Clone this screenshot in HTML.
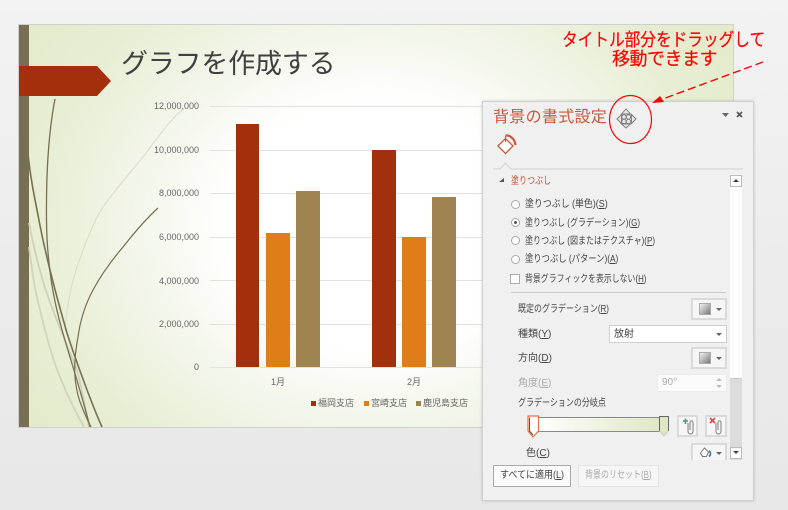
<!DOCTYPE html>
<html><head><meta charset="utf-8"><style>
html,body{margin:0;padding:0}
body{width:788px;height:510px;overflow:hidden;position:relative;background:#ebebeb;font-family:"Liberation Sans","Noto Sans CJK JP",sans-serif}
#w{position:absolute;left:0;top:0;width:788px;height:510px;overflow:hidden;background:linear-gradient(180deg,#f3f3f3 0,#ebebeb 60%,#e8e8e8 100%);filter:blur(.35px)}
.a{position:absolute;white-space:nowrap}
.ax{font-size:9px;color:#666;width:60px;text-align:right;left:139px;line-height:12px}
.l{font-size:10px;color:#444;line-height:13px;transform-origin:0 0}
u{text-decoration:underline}
.g{position:absolute;left:210px;width:524px;height:1px;background:#e2e2e0}
.r{position:absolute;left:511px;width:9px;height:9px;border:1px solid #a8a8a8;border-radius:50%;background:#fff;box-sizing:border-box}
.b{position:absolute;background:#f6f6f6;border:2px solid #dadada;box-sizing:border-box}
.sw{position:absolute;width:12px;height:12px;background:linear-gradient(135deg,#f4f4f4,#777);border:1px solid #aaa;box-sizing:border-box}
.tri{position:absolute;width:0;height:0;border-left:3px solid transparent;border-right:3px solid transparent;border-top:3px solid #666}
</style></head><body><div id="w">
<!-- slide -->
<div class="a" style="left:18px;top:24px;width:716px;height:404px;box-sizing:border-box;border:1px solid #cfcfcf;background:radial-gradient(ellipse 400px 330px at 50% 50%,#fff 0,#fff 38%,#f2f5e8 62%,#e8eed4 85%,#e2e9c6 115%)"></div>
<div class="a" style="left:19px;top:25px;width:10px;height:402px;background:#776f52"></div>
<svg class="a" style="left:0;top:0" width="788" height="510" fill="none">
<path d="M19 66H97L111 81L97 96H19Z" fill="#a32f0d"/>
<path d="M29 223C35 255 44 288 53 310C61 332 70 352 77 370C82 388 85 408 89 427" stroke="#d0d1ba" stroke-width="1.8"/>
<path d="M29 247C32 270 35 292 40 310C46 335 52 358 60 377C67 395 75 411 84 427" stroke="#d2d3bd" stroke-width="1.8"/>
<path d="M182 110C168 122 156 140 143 157C129 174 115 190 103 207C92 224 84 247 77 267C71 285 67 306 65 330" stroke="#dcdeca" stroke-width="1.2"/>
<path d="M55 99C49 130 46 170 46.500 220C47 270 55 305 62 330C70 358 82 395 90 427" stroke="#776f52" stroke-width="1.3"/>
<path d="M28 153C30 175 34 195 38 215C44 248 54 288 67 333C75 358 92 405 102 427" stroke="#776f52" stroke-width="1.6"/>
<path d="M158 208C146 219 134 233 123 247C112 260 101 275 93 290C85 305 80 322 78 337C75 353 74 365 75 377C76 388 78 398 82 407C85 415 88 421 91 427" stroke="#776f52" stroke-width="1.2"/>
</svg>
<div class="a" style="left:121px;top:46px;font-size:27px;line-height:36px;color:#404040;letter-spacing:-.2px">グラフを作成する</div>
<!-- chart -->
<div class="g" style="top:106px"></div><div class="g" style="top:150px"></div><div class="g" style="top:193px"></div><div class="g" style="top:237px"></div><div class="g" style="top:280px"></div><div class="g" style="top:324px"></div><div class="g" style="top:367px"></div>
<div class="a ax" style="top:100px">12,000,000</div>
<div class="a ax" style="top:144px">10,000,000</div>
<div class="a ax" style="top:187px">8,000,000</div>
<div class="a ax" style="top:231px">6,000,000</div>
<div class="a ax" style="top:275px">4,000,000</div>
<div class="a ax" style="top:318px">2,000,000</div>
<div class="a ax" style="top:361px">0</div>
<div class="a" style="left:236px;top:124px;width:23px;height:243px;background:#a32f0d"></div>
<div class="a" style="left:266px;top:233px;width:24px;height:134px;background:#df7d18"></div>
<div class="a" style="left:296px;top:191px;width:24px;height:176px;background:#9f8351"></div>
<div class="a" style="left:372px;top:150px;width:24px;height:217px;background:#a32f0d"></div>
<div class="a" style="left:402px;top:237px;width:24px;height:130px;background:#df7d18"></div>
<div class="a" style="left:432px;top:197px;width:24px;height:170px;background:#9f8351"></div>
<div class="a" style="left:271px;top:376px;font-size:9px;line-height:12px;color:#666">1月</div>
<div class="a" style="left:407px;top:376px;font-size:9px;line-height:12px;color:#666">2月</div>
<div class="a" style="left:311px;top:401px;width:5px;height:5px;background:#a32f0d"></div>
<div class="a" style="left:318px;top:397px;font-size:9px;line-height:12px;color:#666">福岡支店</div>
<div class="a" style="left:364px;top:401px;width:5px;height:5px;background:#df7d18"></div>
<div class="a" style="left:371px;top:397px;font-size:9px;line-height:12px;color:#666">宮崎支店</div>
<div class="a" style="left:416px;top:401px;width:5px;height:5px;background:#9f8351"></div>
<div class="a" style="left:423px;top:397px;font-size:9px;line-height:12px;color:#666">鹿児島支店</div>
<!-- annotation -->
<div class="a" style="left:562px;top:30px;font-size:18px;line-height:21px;color:#f00;transform:scaleX(.87);transform-origin:0 0;-webkit-text-stroke:.2px #f00">タイトル部分をドラッグして</div>
<div class="a" style="left:612px;top:49px;font-size:18px;line-height:21px;color:#f00;letter-spacing:-.5px;-webkit-text-stroke:.2px #f00">移動できます</div>
<!-- panel -->
<div class="a" style="left:482px;top:101px;width:272px;height:400px;box-sizing:border-box;background:#f0f0f0;border:1px solid #d0d0d0;box-shadow:0 0 3px rgba(0,0,0,.18)"></div>
<div class="a" style="left:493px;top:108px;font-size:16px;letter-spacing:.3px;line-height:20px;color:#c8583a">背景の書式設定</div>
<svg class="a" style="left:0;top:0" width="788" height="510" fill="none">
<path d="M763 62L660 100" stroke="#f00" stroke-width="1.4" stroke-dasharray="8 4"/>
<path d="M652 103L660 96L664 102Z" fill="#f00"/>
<ellipse cx="630.500" cy="119.500" rx="21" ry="24" stroke="#f00" stroke-width="1.2"/>
<g stroke="#777" fill="#e8e8e8" stroke-width=".9"><path d="M626 109L630.500 114L621.500 114Z"/><path d="M626 128L630.500 124L621.500 124Z"/><path d="M617 119L621.500 114.500V123.500Z"/><path d="M636 119L631.500 114.500V123.500Z"/><circle cx="624" cy="117" r="2.2"/><circle cx="628.500" cy="117" r="2.2"/><circle cx="624" cy="121.500" r="2.2"/><circle cx="628.500" cy="121.500" r="2.2"/></g>
<path d="M722 113H729L725.500 117Z" fill="#666"/>
<path d="M737 112L742 117M742 112L737 117" stroke="#555" stroke-width="1.6"/>
<path d="M498 146L505.500 138.500L513 146L505.500 153.500Z" stroke="#c8583a" stroke-width="1.3" fill="#fff"/>
<path d="M505.500 135.500C510 135 515 139 515.500 145" stroke="#c8583a" stroke-width="2.2"/>
<path d="M505.500 136V142" stroke="#c8583a" stroke-width="1"/>
<path d="M493 169H500L505.500 163L511 169H743" stroke="#cfcfcf" fill="#f0f0f0"/>
<path d="M499 182H504V178Z" fill="#555"/>
<path d="M511 292.500H726" stroke="#c8c8c8"/>
</svg>
<div class="a l" style="left:511px;top:175px;color:#c8502e;transform:scaleX(.8)">塗りつぶし</div>
<div class="r" style="top:200px"></div>
<div class="r" style="top:218px"></div><div class="a" style="left:514px;top:221px;width:3px;height:3px;border-radius:50%;background:#555"></div>
<div class="r" style="top:236px"></div>
<div class="r" style="top:255px"></div>
<div class="a l" style="left:525px;top:198px;transform:scaleX(.89)">塗りつぶし (単色)(<u>S</u>)</div>
<div class="a l" style="left:525px;top:217px;transform:scaleX(.8)">塗りつぶし (グラデーション)(<u>G</u>)</div>
<div class="a l" style="left:525px;top:235px;transform:scaleX(.8)">塗りつぶし (図またはテクスチャ)(<u>P</u>)</div>
<div class="a l" style="left:525px;top:253px;transform:scaleX(.83)">塗りつぶし (パターン)(<u>A</u>)</div>
<div class="a" style="left:510px;top:274px;width:10px;height:10px;border:1px solid #aaa;background:#fff;box-sizing:border-box"></div>
<div class="a l" style="left:525px;top:273px;transform:scaleX(.79)">背景グラフィックを表示しない(<u>H</u>)</div>
<div class="a l" style="left:518px;top:303px;transform:scaleX(.8)">既定のグラデーション(<u>R</u>)</div>
<div class="b" style="left:691px;top:298px;width:36px;height:22px"></div><div class="sw" style="left:699px;top:303px"></div><div class="tri" style="left:716px;top:308px"></div>
<div class="a l" style="left:518px;top:328px">種類(<u>Y</u>)</div>
<div class="a" style="left:609px;top:325px;width:118px;height:18px;background:#fff;border:1px solid #cfcfcf;box-sizing:border-box"></div>
<div class="a l" style="left:614px;top:328px">放射</div><div class="tri" style="left:716px;top:333px"></div>
<div class="a l" style="left:518px;top:352px">方向(<u>D</u>)</div>
<div class="b" style="left:691px;top:347px;width:36px;height:22px"></div><div class="sw" style="left:699px;top:352px"></div><div class="tri" style="left:716px;top:357px"></div>
<div class="a l" style="left:518px;top:377px;color:#aaa">角度(<u>E</u>)</div>
<div class="a" style="left:657px;top:374px;width:70px;height:18px;background:#fbfbfb;border:1px solid #ececec;box-sizing:border-box"></div>
<div class="a l" style="left:662px;top:376px;color:#aaa">90°</div>
<div class="tri" style="left:716px;top:385px;border-top-color:#bbb"></div>
<div class="tri" style="left:716px;top:378px;border-top:0;border-bottom:3px solid #bbb"></div>
<div class="a l" style="left:518px;top:397px;transform:scaleX(.8)">グラデーションの分岐点</div>
<div class="a" style="left:534px;top:417px;width:130px;height:15px;box-sizing:border-box;border-top:1px solid #888;border-bottom:1px solid #888;background:linear-gradient(90deg,#fff,#dfe6c4)"></div>
<svg class="a" style="left:0;top:0" width="788" height="510" fill="none">
<path d="M528 416H538.500V431L533 437L528 431Z" fill="#fff" stroke="#e8703a" stroke-width="1.2"/>
<path d="M529.500 417.500V431L533 435" stroke="#555" stroke-width="1"/>
<path d="M659.500 416.500H668.500V431L664 436L659.500 431Z" fill="#dfe6c4"/>
<path d="M659.500 431V416.500H668.500V431" stroke="#666"/>
<path d="M659.500 431L664 436L668.500 431" stroke="#ccc"/>
</svg>
<div class="b" style="left:677px;top:415px;width:21px;height:22px"></div>
<div class="b" style="left:705px;top:415px;width:22px;height:22px"></div>
<svg class="a" style="left:0;top:0" width="788" height="510" fill="none">
<path d="M688 423V431C688 435 693 435 693 431V423C693 420 690 420 690 423V430" stroke="#888" stroke-width="1.1"/>
<path d="M683 421H688M685.500 418.500V424" stroke="#4a9a86" stroke-width="1.6"/>
<path d="M716 423V431C716 435 721 435 721 431V423C721 420 718 420 718 423V430" stroke="#888" stroke-width="1.1"/>
<path d="M710 418L715 423M715 418L710 423" stroke="#d94a3a" stroke-width="1.6"/>
</svg>
<div class="a l" style="left:526px;top:447px">色(<u>C</u>)</div>
<div class="a" style="left:691px;top:443px;width:36px;height:17px;background:#f6f6f6;border:2px solid #dadada;border-bottom:0;box-sizing:border-box"></div>
<svg class="a" style="left:0;top:0" width="788" height="510" fill="none">
<path d="M700.500 453L704.500 448L708.500 452L706.500 456.500H702.500Z" stroke="#777" fill="#fff"/>
<path d="M709 451C711 452 711 455 709 456.500" stroke="#3b78b8" stroke-width="1.6"/>
</svg>
<div class="tri" style="left:716px;top:452px"></div>
<!-- scrollbar -->
<div class="a" style="left:730px;top:175px;width:12px;height:285px;background:#dcdcdc"></div>
<div class="a" style="left:730px;top:187px;width:12px;height:192px;background:#fff;border-bottom:1px solid #ccc;box-sizing:border-box"></div>
<div class="a" style="left:730px;top:175px;width:12px;height:12px;background:#fff;border:1px solid #bbb;box-sizing:border-box"></div>
<div class="tri" style="left:733px;top:179px;border-top:0;border-bottom:3px solid #444"></div>
<div class="a" style="left:730px;top:447px;width:12px;height:12px;background:#fff;border:1px solid #bbb;box-sizing:border-box"></div>
<div class="tri" style="left:733px;top:451px;border-top-color:#444"></div>
<!-- buttons -->
<div class="a" style="left:493px;top:465px;width:78px;height:22px;box-sizing:border-box;background:#fbfbfb;border:1px solid #aaa"></div>
<div class="a l" style="left:500px;top:469px;transform:scaleX(.9)">すべてに適用(<u>L</u>)</div>
<div class="a" style="left:578px;top:465px;width:81px;height:22px;box-sizing:border-box;background:#f6f6f6;border:1px solid #e4e4e4"></div>
<div class="a l" style="left:585px;top:469px;color:#aaa;transform:scaleX(.8)">背景のリセット(<u>B</u>)</div>
</div></body></html>
